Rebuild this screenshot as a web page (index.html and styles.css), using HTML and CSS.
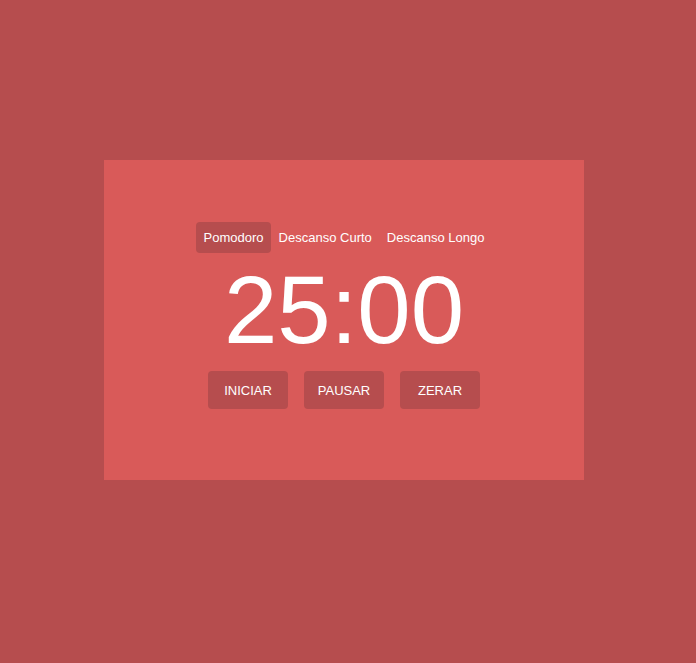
FILE: index.html
```html
<!DOCTYPE html>
<html lang="pt">
<head>
<meta charset="utf-8">
<title>Pomodoro</title>
<link rel="stylesheet" href="styles.css">
</head>
<body>
<div class="page">
  <main class="card">
    <nav class="tabs">
      <button class="tab active">Pomodoro</button>
      <button class="tab">Descanso Curto</button>
      <button class="tab">Descanso Longo</button>
    </nav>
    <div class="timer">25:00</div>
    <div class="controls">
      <button class="control">INICIAR</button>
      <button class="control">PAUSAR</button>
      <button class="control">ZERAR</button>
    </div>
  </main>
</div>
</body>
</html>
```

FILE: styles.css
```css
html, body {
  margin: 0;
  height: 100%;
  background: #b64d4e;
  font-family: "Liberation Sans", Arial, Helvetica, sans-serif;
  color: #ffffff;
}

.page {
  display: flex;
  justify-content: center;
  padding: 160px 8px 0 0;
}

.card {
  width: 480px;
  height: 320px;
  box-sizing: border-box;
  background: #d95a59;
  padding-top: 62px;
  display: flex;
  flex-direction: column;
  align-items: center;
}

.tabs {
  display: flex;
}

.tab {
  font: 13px/15px "Liberation Sans", Arial, sans-serif;
  color: #ffffff;
  background: transparent;
  border: none;
  border-radius: 4px;
  padding: 8px 7.5px;
  margin: 0;
  cursor: pointer;
}

.tab.active {
  background: #b64d4e;
}

.timer {
  margin-top: 2px;
  font-size: 96px;
  line-height: 110px;
  letter-spacing: 0;
}

.controls {
  margin-top: 6px;
  display: flex;
  gap: 16px;
}

.control {
  width: 80px;
  height: 38px;
  font: 13px/15px "Liberation Sans", Arial, sans-serif;
  color: #ffffff;
  background: #b64d4e;
  border: none;
  border-radius: 4px;
  padding: 0;
  cursor: pointer;
}
```
